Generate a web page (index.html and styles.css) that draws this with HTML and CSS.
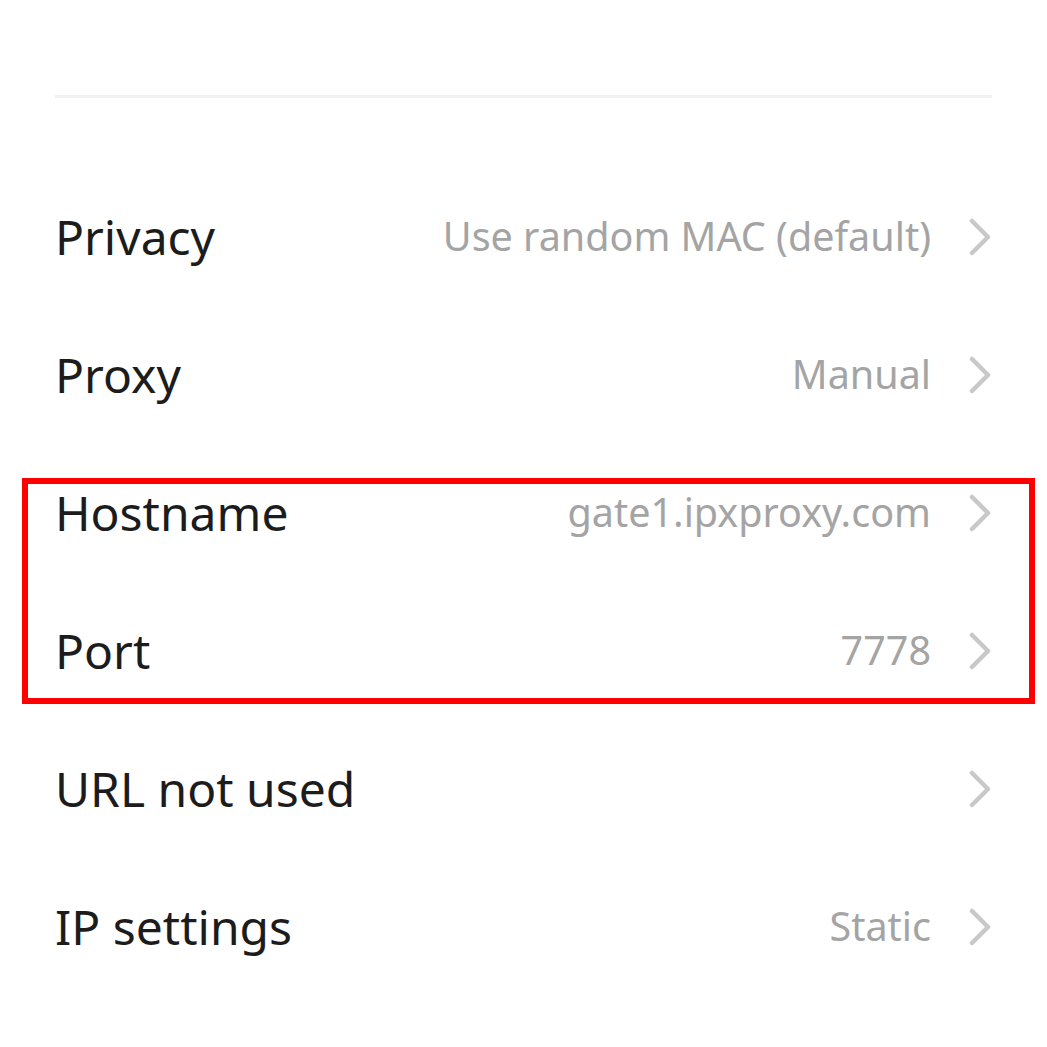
FILE: index.html
```html
<!DOCTYPE html>
<html lang="en">
<head>
<meta charset="utf-8">
<link rel="stylesheet" href="styles.css">
</head>
<body>
<div class="page">
  <div class="divider"></div>
  <div class="list">
    <div class="row"><span class="label">Privacy</span><span class="value">Use random MAC (default)</span><span class="chev"><svg viewBox="0 0 22 38" width="22" height="38"><path d="M3 3 L19 19 L3 35" fill="none" stroke="#c8c8c8" stroke-width="4.5" stroke-linecap="round" stroke-linejoin="round"/></svg></span></div>
    <div class="row"><span class="label">Proxy</span><span class="value">Manual</span><span class="chev"><svg viewBox="0 0 22 38" width="22" height="38"><path d="M3 3 L19 19 L3 35" fill="none" stroke="#c8c8c8" stroke-width="4.5" stroke-linecap="round" stroke-linejoin="round"/></svg></span></div>
    <div class="row"><span class="label">Hostname</span><span class="value">gate1.ipxproxy.com</span><span class="chev"><svg viewBox="0 0 22 38" width="22" height="38"><path d="M3 3 L19 19 L3 35" fill="none" stroke="#c8c8c8" stroke-width="4.5" stroke-linecap="round" stroke-linejoin="round"/></svg></span></div>
    <div class="row"><span class="label">Port</span><span class="value">7778</span><span class="chev"><svg viewBox="0 0 22 38" width="22" height="38"><path d="M3 3 L19 19 L3 35" fill="none" stroke="#c8c8c8" stroke-width="4.5" stroke-linecap="round" stroke-linejoin="round"/></svg></span></div>
    <div class="row"><span class="label">URL not used</span><span class="value"></span><span class="chev"><svg viewBox="0 0 22 38" width="22" height="38"><path d="M3 3 L19 19 L3 35" fill="none" stroke="#c8c8c8" stroke-width="4.5" stroke-linecap="round" stroke-linejoin="round"/></svg></span></div>
    <div class="row"><span class="label">IP settings</span><span class="value">Static</span><span class="chev"><svg viewBox="0 0 22 38" width="22" height="38"><path d="M3 3 L19 19 L3 35" fill="none" stroke="#c8c8c8" stroke-width="4.5" stroke-linecap="round" stroke-linejoin="round"/></svg></span></div>
  </div>
  <div class="highlight"></div>
</div>
</body>
</html>
```

FILE: styles.css
```css
html, body {
  margin: 0;
  padding: 0;
  background: #ffffff;
  overflow: hidden;
}
.page {
  position: relative;
  width: 1047px;
  height: 1047px;
  overflow: hidden;
  font-family: "Noto Sans", "Open Sans", sans-serif;
}
.divider {
  margin: 95px 55px 0 55px;
  height: 3px;
  background: #f1f1f1;
}
.list {
  display: flex;
  flex-direction: column;
  margin-top: 69px;
  padding: 0 56px 0 55px;
}
.row {
  display: flex;
  align-items: center;
  height: 138px;
}
.label {
  font-size: 48px;
  color: #1c1c1c;
  flex: 1;
  white-space: nowrap;
}
.value {
  font-size: 39.5px;
  color: #a4a4a4;
  white-space: nowrap;
  margin-right: 38px;
}
.chev {
  display: flex;
  width: 22px;
  height: 38px;
  margin-top: 2px;
}
.highlight {
  position: absolute;
  left: 22px;
  top: 478px;
  width: 1001px;
  height: 214px;
  border: 6px solid #ff0000;
}
```
